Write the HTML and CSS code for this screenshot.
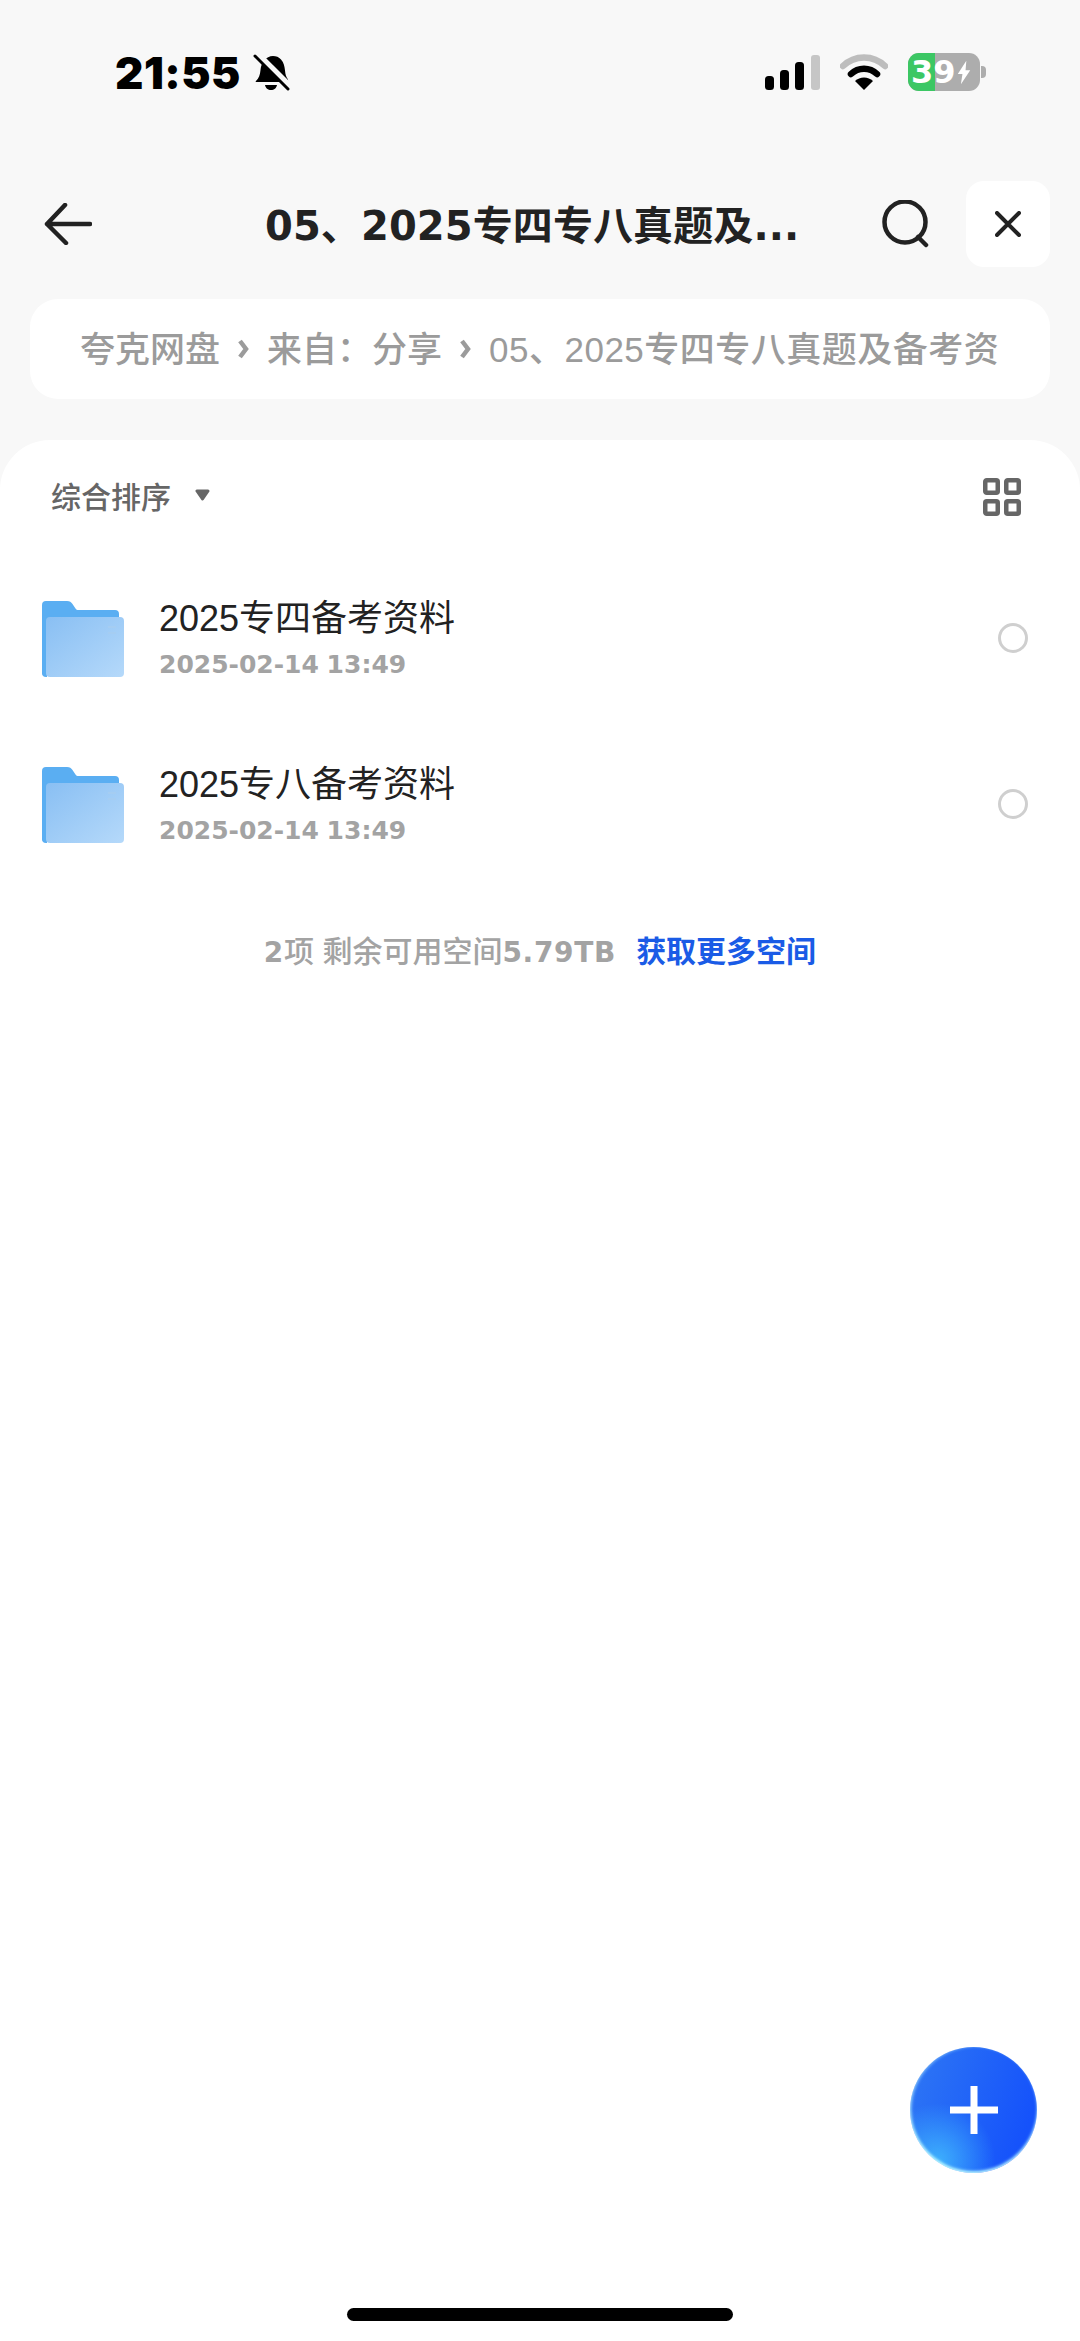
FILE: index.html
```html
<!DOCTYPE html>
<html lang="zh-CN">
<head>
    <meta charset="UTF-8">
    <meta name="viewport" content="width=device-width, initial-scale=1.0">
    <title>夸克网盘</title>
    <link rel="stylesheet" href="styles.css">
</head>
<body>
    <div class="status-bar">
        <div class="status-left">
            <span class="clock">21:55</span>
            <svg class="bell" width="37" height="38" viewBox="0 0 37 38">
                <path d="M3 27c3-3 4-6 4.500-11C8 9 13 2 20 2c3 0 6 1 8 3.500 3 3 3.500 7 4 11 .4 4 1 6 3 9 .5 1-.2 2.500-1.500 2.500H4.500C3 28 2 28 3 27z" fill="#000"/>
                <path d="M12 31h12c-.5 3-3 5-6 5s-5.500-2-6-5z" fill="#000"/>
                <path d="M3 -1l34 34" stroke="#f8f8f8" stroke-width="7"/>
                <path d="M2 2l33 33" stroke="#000" stroke-width="3" stroke-linecap="round"/>
            </svg>
        </div>
        <div class="status-right">
            <svg width="55" height="35" viewBox="0 0 55 35">
                <rect x="0" y="21" width="9" height="14" rx="3.500" fill="#000"/>
                <rect x="15" y="15" width="9" height="20" rx="3.500" fill="#000"/>
                <rect x="30" y="7" width="9" height="28" rx="3.500" fill="#000"/>
                <rect x="46" y="0" width="9" height="35" rx="3" fill="#c6c6c6"/>
            </svg>
            <svg class="wifi" width="48" height="36" viewBox="0 0 48 36">
                <path d="M3 12a30 30 0 0 1 42 0" fill="none" stroke="#bdbdbd" stroke-width="6.500" stroke-linecap="round"/>
                <path d="M11 20a19 19 0 0 1 26 0" fill="none" stroke="#000" stroke-width="6.500" stroke-linecap="round"/>
                <path d="M15 27a13 13 0 0 1 18 0l-9 9z" fill="#000"/>
            </svg>
            <div class="battery">
                <div class="battery-fill"></div>
                <span class="battery-num">39</span>
                <svg class="battery-bolt" width="14" height="25" viewBox="0 0 18 30">
                    <path d="M12 0L1 17h6l-2 13L17 12h-6z" fill="#fff"/>
                </svg>
            </div>
            <div class="battery-cap"></div>
        </div>
    </div>

    <div class="nav-bar">
        <svg class="back-icon" width="48" height="42" viewBox="0 0 48 42">
            <path d="M46 21H3M21 2L3 21l19 19" fill="none" stroke="#222" stroke-width="4.500" stroke-linecap="round" stroke-linejoin="round"/>
        </svg>
        <div class="nav-title">05、2025专四专八真题及...</div>
        <svg class="search-icon" width="48" height="48" viewBox="0 0 48 48">
            <circle cx="23" cy="22" r="20.500" fill="none" stroke="#222" stroke-width="4.500"/>
            <path d="M36 37l8 8" stroke="#222" stroke-width="4.500" stroke-linecap="round"/>
        </svg>
        <div class="close-btn">
            <svg width="26" height="26" viewBox="0 0 26 26">
                <path d="M2 2l22 22M24 2L2 24" stroke="#222" stroke-width="4" stroke-linecap="round"/>
            </svg>
        </div>
    </div>

    <div class="crumbs">
        <span>夸克网盘</span>
        <svg width="11" height="20" viewBox="0 0 11 20"><path d="M2 2l6 8-6 8" fill="none" stroke="#9b9b9b" stroke-width="4.500"/></svg>
        <span>来自：分享</span>
        <svg width="11" height="20" viewBox="0 0 11 20"><path d="M2 2l6 8-6 8" fill="none" stroke="#9b9b9b" stroke-width="4.500"/></svg>
        <span class="crumb-last">05、2025专四专八真题及备考资</span>
    </div>

    <div class="sheet">
        <div class="sort-row">
            <div class="sort-label">
                综合排序
                <svg class="sort-caret" width="17" height="12" viewBox="0 0 17 12">
                    <path d="M3 2h11l-5.500 8z" fill="#666" stroke="#666" stroke-width="3" stroke-linejoin="round"/>
                </svg>
            </div>
            <svg class="grid-icon" width="38" height="38" viewBox="0 0 38 38">
                <g fill="none" stroke="#666" stroke-width="4.500">
                    <rect x="2.250" y="2.250" width="12.500" height="12.500" rx="1.500"/>
                    <rect x="23.250" y="2.250" width="12.500" height="12.500" rx="1.500"/>
                    <rect x="2.250" y="23.250" width="12.500" height="12.500" rx="1.500"/>
                    <rect x="23.250" y="23.250" width="12.500" height="12.500" rx="1.500"/>
                </g>
            </svg>
        </div>

        <div class="file-row">
            <svg class="folder" width="82" height="76" viewBox="0 0 82 76">
                <use href="#folder-shape"/>
            </svg>
            <div class="file-info">
                <div class="file-name">2025专四备考资料</div>
                <div class="file-date">2025-02-14 13:49</div>
            </div>
            <div class="radio"></div>
        </div>
        <div class="file-row">
            <svg class="folder" width="82" height="76" viewBox="0 0 82 76">
                <use href="#folder-shape"/>
            </svg>
            <div class="file-info">
                <div class="file-name">2025专八备考资料</div>
                <div class="file-date">2025-02-14 13:49</div>
            </div>
            <div class="radio"></div>
        </div>

        <div class="summary">
            <span><span class="num">2</span>项 剩余可用空间<span class="num">5.79TB</span></span>
            <span class="more-link">获取更多空间</span>
        </div>
    </div>

    <div class="fab">
        <svg width="48" height="48" viewBox="0 0 48 48">
            <path d="M20.500 0h7v20.500H48v7H27.500V48h-7V27.500H0v-7h20.500z" fill="#fff"/>
        </svg>
    </div>
    <div class="home-bar"></div>

    <!-- shared folder drawing -->
    <svg class="defs" width="0" height="0">
        <defs>
            <linearGradient id="folder-front" x1="0" y1="0" x2="1" y2="1">
                <stop offset="0" stop-color="#89bff3"/>
                <stop offset="1" stop-color="#b5d9fa"/>
            </linearGradient>
            <g id="folder-shape">
                <path d="M0 4a4 4 0 0 1 4-4h21c3 0 4 1 5.500 3l3 4.500c.8 1 1.500 1.500 3 1.500H73a4 4 0 0 1 4 4v10H5v53H4a4 4 0 0 1-4-4z" fill="#5aaef2"/>
                <rect x="0" y="14" width="12" height="61" rx="4" fill="#5aaef2"/>
                <rect x="4" y="16" width="78" height="60" rx="4" fill="url(#folder-front)"/>
                <rect x="66" y="25" width="8" height="2" fill="#a5cdf2"/>
                <rect x="66" y="31" width="8" height="2" fill="#a5cdf2"/>
            </g>
        </defs>
    </svg>
</body>
</html>
```

FILE: styles.css
```css
* {
    box-sizing: border-box;
}
html, body {
    margin: 0;
    height: 2341px;
    overflow: hidden;
}
body {
    position: relative;
    display: flex;
    flex-direction: column;
    background-color: #f8f8f8;
    font-family: "Liberation Sans", "Noto Sans CJK SC", sans-serif;
}

.status-bar {
    flex-shrink: 0;
    height: 181px;
    padding: 51px 94px 0 115px;
    display: flex;
    justify-content: space-between;
    align-items: flex-start;
}
.status-left {
    display: flex;
    align-items: center;
    gap: 12px;
}
.clock {
    font-family: "Inter", sans-serif;
    font-size: 44px;
    line-height: 44px;
    font-weight: 900;
    letter-spacing: 0.5px;
    color: #000;
}
.status-right {
    display: flex;
    align-items: center;
    margin-top: 2px;
}
.wifi {
    margin-left: 20px;
}
.battery {
    margin-left: 20px;
    width: 72px;
    height: 38px;
    border-radius: 11px;
    background-color: #adadad;
    position: relative;
    overflow: hidden;
    display: flex;
    align-items: center;
    padding-left: 3px;
}
.battery-fill {
    position: absolute;
    left: 0;
    top: 0;
    bottom: 0;
    width: 27px;
    background-color: #3cc764;
}
.battery-num {
    position: relative;
    font-family: "DejaVu Sans", sans-serif;
    font-size: 32px;
    line-height: 38px;
    font-weight: 700;
    color: #fff;
}
.battery-bolt {
    position: relative;
    margin-left: 1px;
}
.battery-cap {
    width: 5px;
    height: 12px;
    margin-left: 1px;
    border-radius: 0 4px 4px 0;
    background-color: #adadad;
}

.nav-bar {
    flex-shrink: 0;
    height: 86px;
    padding: 0 30px 0 44px;
    display: flex;
    align-items: center;
}
.nav-title {
    flex: 1;
    margin-left: 173px;
    padding-bottom: 3px;
    font-family: "DejaVu Sans", "Noto Sans CJK SC", sans-serif;
    font-size: 40px;
    font-weight: 700;
    letter-spacing: 0.1px;
    color: #222;
    white-space: nowrap;
}
.close-btn {
    margin-left: 36px;
    width: 84px;
    height: 86px;
    border-radius: 18px;
    background-color: #fff;
    display: flex;
    justify-content: center;
    align-items: center;
}

.crumbs {
    flex-shrink: 0;
    margin: 32px 30px 0;
    height: 100px;
    padding: 0 50px;
    border-radius: 28px;
    background-color: #fff;
    display: flex;
    align-items: center;
    gap: 18px;
    font-size: 35px;
    font-weight: 500;
    color: #9b9b9b;
    white-space: nowrap;
}
.crumbs span {
    margin-bottom: 5px;
}
.crumb-last {
    letter-spacing: 0.5px;
}

.sheet {
    flex: 1;
    margin-top: 41px;
    border-radius: 50px 50px 0 0;
    background-color: #fff;
}
.sort-row {
    height: 115px;
    padding: 0 59px 6px 51px;
    display: flex;
    justify-content: space-between;
    align-items: center;
}
.sort-label {
    font-size: 30px;
    font-weight: 500;
    color: #666;
    display: flex;
    align-items: center;
}
.sort-caret {
    margin-left: 23px;
}
.grid-icon {
    margin-top: 5px;
}
.file-row {
    height: 166px;
    padding: 0 52px 0 42px;
    display: flex;
    align-items: center;
}
.folder {
    flex-shrink: 0;
    margin-top: 1px;
}
.file-info {
    margin-left: 35px;
    flex: 1;
}
.file-name {
    font-size: 36px;
    line-height: 48px;
    color: #222;
}
.file-date {
    margin-top: 6px;
    font-family: "DejaVu Sans", sans-serif;
    font-size: 25px;
    line-height: 32px;
    font-weight: 700;
    word-spacing: -1px;
    color: #a3a3a3;
}
.radio {
    width: 30px;
    height: 30px;
    border: 3px solid #cfcfcf;
    border-radius: 50%;
}
.summary {
    margin-top: 40px;
    display: flex;
    justify-content: center;
    align-items: baseline;
    gap: 20px;
    font-size: 30px;
    font-weight: 500;
    color: #a3a3a3;
}
.num {
    font-family: "DejaVu Sans", sans-serif;
    font-size: 28px;
    font-weight: 700;
    letter-spacing: 0.7px;
}
.more-link {
    font-weight: 700;
    color: #1a5be6;
}

.fab {
    position: absolute;
    left: 910px;
    top: 2047px;
    width: 127px;
    height: 126px;
    border-radius: 50%;
    background: radial-gradient(circle at 22% 90%, rgba(70, 200, 255, 0.75), rgba(70, 190, 255, 0) 38%), linear-gradient(110deg, #2f78f4, #1552fb 85%);
    display: flex;
    justify-content: center;
    align-items: center;
    box-shadow: inset 0 -2px 3px rgba(190, 250, 255, 0.9), inset 2px 0 3px rgba(190, 250, 255, 0.4);
}
.home-bar {
    position: absolute;
    left: 347px;
    top: 2308px;
    width: 386px;
    height: 13px;
    border-radius: 7px;
    background-color: #000;
}
.defs {
    position: absolute;
}
```
